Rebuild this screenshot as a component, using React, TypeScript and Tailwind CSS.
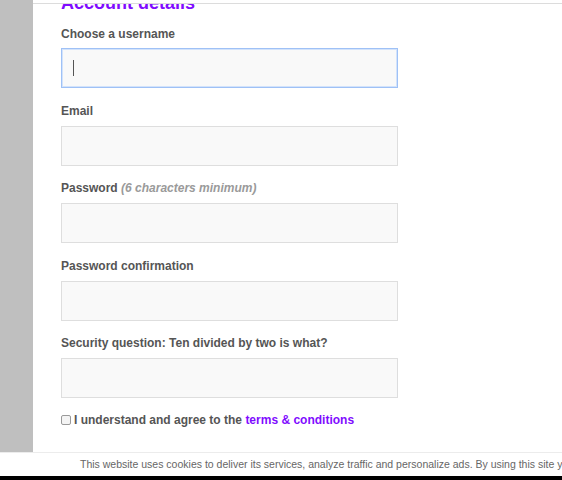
import React from "react";

function Field({
  label,
  hint,
  focused,
  className,
}: {
  label: string;
  hint?: string;
  focused?: boolean;
  className?: string;
}) {
  return (
    <div className={className}>
      <div className="h-[17px] pt-[1px] text-[12px] leading-[16px] font-bold text-[#555555] whitespace-nowrap">
        {label}
        {hint && <span className="italic text-[#9a9a9a]"> {hint}</span>}
      </div>
      <div
        className={
          focused
            ? "mt-[6px] h-[40px] w-[337px] bg-[#f9f9f9] border border-[#9fc1f6] shadow-[inset_0_0_0_1px_#d3e3fb] flex items-center pl-[11px]"
            : "mt-[7px] h-[40px] w-[337px] bg-[#f9f9f9] border border-[#dedede]"
        }
      >
        {focused && <span className="block w-[1px] h-[16px] bg-[#555555]" />}
      </div>
    </div>
  );
}

export default function App() {
  return (
    <div
      className="w-[562px] h-[480px] flex flex-col overflow-hidden bg-white"
      style={{ fontFamily: '"Liberation Sans", Arial, sans-serif' }}
    >
      <div className="h-[452px] flex">
        <div className="w-[33px] bg-[#bfbfbf]" />
        <div className="flex-1 flex flex-col">
          <div className="h-[4px] border-b border-[#dcdcdc] bg-white shrink-0" />
          <div className="flex-1 overflow-hidden pl-[28px]">
            <div className="-mt-[11px] h-[20px] text-[18px] leading-[20px] font-bold text-[#7f0cff] whitespace-nowrap">
              Account details
            </div>
            <Field className="mt-[12px]" label="Choose a username" focused />
            <Field className="mt-[14px]" label="Email" />
            <Field className="mt-[13px]" label="Password" hint="(6 characters minimum)" />
            <Field className="mt-[14px]" label="Password confirmation" />
            <Field className="mt-[13px]" label="Security question: Ten divided by two is what?" />
            <div className="mt-[14px] flex items-center h-[16px] text-[12px] font-bold text-[#555555] whitespace-nowrap">
              <span className="w-[10px] h-[10px] border border-[#9a9a9a] rounded-[2px] bg-[#f4f4f4] mr-[3px]" />
              <span>
                I understand and agree to the{" "}
                <span className="text-[#7f0cff]">terms &amp; conditions</span>
              </span>
            </div>
          </div>
        </div>
      </div>
      <div className="h-[24px] border-t border-[#ececec] bg-white flex items-center pl-[80px] overflow-hidden">
        <span className="text-[10.5px] text-[#666666] whitespace-nowrap">
          This website uses cookies to deliver its services, analyze traffic and personalize ads. By using this site you agree to its use of cookies.
        </span>
      </div>
      <div className="h-[4px] bg-black" />
    </div>
  );
}
